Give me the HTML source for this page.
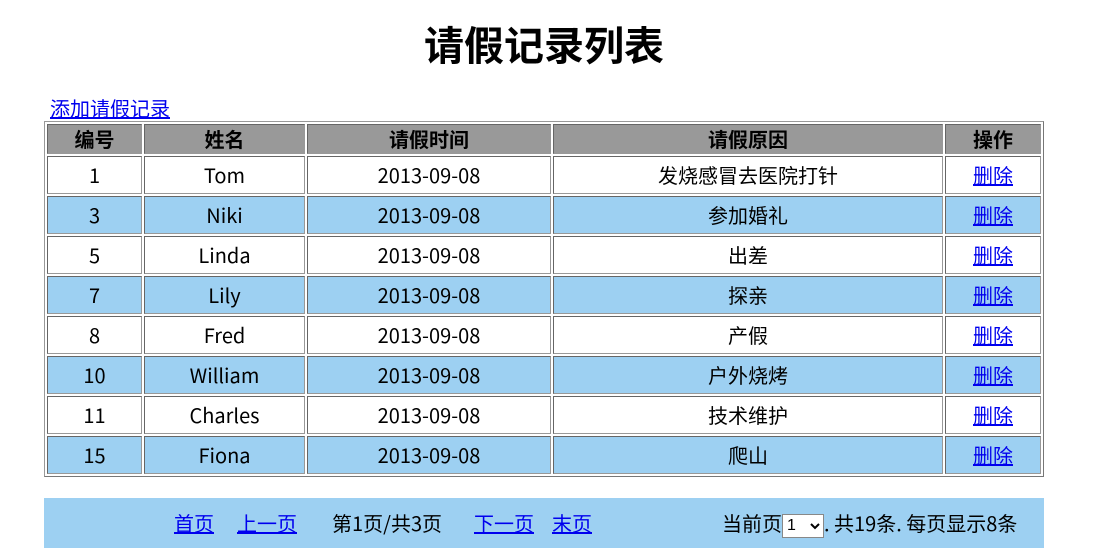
<!DOCTYPE html>
<html><head><meta charset="utf-8"><style>
body{margin:0;width:1095px;height:559px;overflow:hidden;background:#fff;font-family:"Noto Sans CJK SC",sans-serif;font-size:20px;color:#000;position:relative}
h1{position:absolute;left:0;width:1088px;top:18px;margin:0;text-align:center;font-size:40px;font-weight:bold;line-height:50px}
a{color:#00e}
.add{position:absolute;left:50px;top:94px;line-height:28px}
table{position:absolute;left:44px;top:121px;width:1000px;border:1px solid #999;border-collapse:separate;border-spacing:2px;border-right-color:#777;border-bottom-color:#777}
td,th{border:1px solid #999;border-top-color:#666;border-left-color:#666;text-align:center;padding:0;height:36px;line-height:36px;font-weight:normal}
th{background:#999;height:28px;line-height:28px;font-weight:bold}
tr.b td{background:#9dd0f2}
.foot{position:absolute;left:44px;top:498px;width:1000px;height:50px;background:#9dd0f2;line-height:50px}
.foot span{position:absolute;top:0}
select{font-size:16px;height:24px;width:42px;vertical-align:middle;border:1px solid #888;background:#fff;padding:0;font-family:"Liberation Sans",sans-serif}
</style></head><body>
<h1>请假记录列表</h1>
<a class="add" href="#">添加请假记录</a>
<table>
<tr><th style="width:93px">编号</th><th style="width:159px">姓名</th><th style="width:242px">请假时间</th><th style="width:388px">请假原因</th><th>操作</th></tr>
<tr><td>1</td><td>Tom</td><td>2013-09-08</td><td>发烧感冒去医院打针</td><td><a href="#">删除</a></td></tr>
<tr class="b"><td>3</td><td>Niki</td><td>2013-09-08</td><td>参加婚礼</td><td><a href="#">删除</a></td></tr>
<tr><td>5</td><td>Linda</td><td>2013-09-08</td><td>出差</td><td><a href="#">删除</a></td></tr>
<tr class="b"><td>7</td><td>Lily</td><td>2013-09-08</td><td>探亲</td><td><a href="#">删除</a></td></tr>
<tr><td>8</td><td>Fred</td><td>2013-09-08</td><td>产假</td><td><a href="#">删除</a></td></tr>
<tr class="b"><td>10</td><td>William</td><td>2013-09-08</td><td>户外烧烤</td><td><a href="#">删除</a></td></tr>
<tr><td>11</td><td>Charles</td><td>2013-09-08</td><td>技术维护</td><td><a href="#">删除</a></td></tr>
<tr class="b"><td>15</td><td>Fiona</td><td>2013-09-08</td><td>爬山</td><td><a href="#">删除</a></td></tr>
</table>
<div class="foot">
<span style="left:130px"><a href="#">首页</a></span>
<span style="left:193px"><a href="#">上一页</a></span>
<span style="left:288px">第1页/共3页</span>
<span style="left:430px"><a href="#">下一页</a></span>
<span style="left:508px"><a href="#">末页</a></span>
<span style="left:678px">当前页<select><option>1</option></select>. 共19条. 每页显示8条</span>
</div>
</body></html>
